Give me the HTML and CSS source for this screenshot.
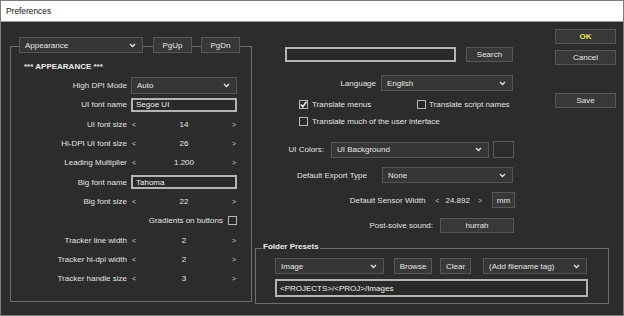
FILE: index.html
```html
<!DOCTYPE html>
<html>
<head>
<meta charset="utf-8">
<link rel="stylesheet" href="styles.css">
</head>
<body>
<div class="window">
  <div class="titlebar">Preferences</div>
  <div class="content">
    <div class="lgroup">
      <div class="ghead">
        <div class="combo hcombo"><span>Appearance</span><svg class="chev" width="7" height="5" viewBox="0 0 7 5"><path d="M1 1l2.5 2.5L6 1" fill="none" stroke="#e0e0e0" stroke-width="1.4"/></svg></div>
        <div class="btn pg">PgUp</div>
        <div class="btn pg">PgDn</div>
      </div>
      <div class="gtitle">*** APPEARANCE ***</div>
      <div class="row"><span class="lbl">High DPI Mode</span><div class="combo ctl"><span>Auto</span><svg class="chev" width="7" height="5" viewBox="0 0 7 5"><path d="M1 1l2.5 2.5L6 1" fill="none" stroke="#e0e0e0" stroke-width="1.4"/></svg></div></div>
      <div class="row"><span class="lbl">UI font name</span><div class="tbox ctl">Segoe UI</div></div>
      <div class="row"><span class="lbl">UI font size</span><div class="step ctl"><span class="arr">&lt;</span><span>14</span><span class="arr">&gt;</span></div></div>
      <div class="row"><span class="lbl">Hi-DPI UI font size</span><div class="step ctl"><span class="arr">&lt;</span><span>26</span><span class="arr">&gt;</span></div></div>
      <div class="row"><span class="lbl">Leading Multiplier</span><div class="step ctl"><span class="arr">&lt;</span><span>1.200</span><span class="arr">&gt;</span></div></div>
      <div class="row"><span class="lbl">Big font name</span><div class="tbox ctl">Tahoma</div></div>
      <div class="row"><span class="lbl">Big font size</span><div class="step ctl"><span class="arr">&lt;</span><span>22</span><span class="arr">&gt;</span></div></div>
      <div class="crow"><span>Gradients on buttons</span><span class="cb"></span></div>
      <div class="row"><span class="lbl">Tracker line width</span><div class="step ctl"><span class="arr">&lt;</span><span>2</span><span class="arr">&gt;</span></div></div>
      <div class="row"><span class="lbl">Tracker hi-dpi width</span><div class="step ctl"><span class="arr">&lt;</span><span>2</span><span class="arr">&gt;</span></div></div>
      <div class="row"><span class="lbl">Tracker handle size</span><div class="step ctl"><span class="arr">&lt;</span><span>3</span><span class="arr">&gt;</span></div></div>
    </div>

    <div class="mid">
      <div class="mrow r-search"><div class="tbox search"></div><div class="btn sbtn">Search</div></div>
      <div class="mrow r-lang"><span>Language</span><div class="combo lang"><span>English</span><svg class="chev" width="7" height="5" viewBox="0 0 7 5"><path d="M1 1l2.5 2.5L6 1" fill="none" stroke="#e0e0e0" stroke-width="1.4"/></svg></div></div>
      <div class="cbrow r-cb1">
        <span class="cbitem first"><span class="cb"><svg width="9" height="9" viewBox="0 0 9 9"><path d="M1.8 4.6l2 2.2 3.6-5" fill="none" stroke="#f0f0f0" stroke-width="1.5"/></svg></span>Translate menus</span>
        <span class="cbitem second"><span class="cb"></span>Translate script names</span>
      </div>
      <div class="cbrow r-cb2"><span class="cbitem"><span class="cb"></span>Translate much of the user interface</span></div>
      <div class="mrow r-colors"><span>UI Colors:</span><div class="combo colors"><span>UI Background</span><svg class="chev" width="7" height="5" viewBox="0 0 7 5"><path d="M1 1l2.5 2.5L6 1" fill="none" stroke="#e0e0e0" stroke-width="1.4"/></svg></div><div class="swatch"></div></div>
      <div class="mrow r-export"><span>Default Export Type</span><div class="combo export"><span>None</span><svg class="chev" width="7" height="5" viewBox="0 0 7 5"><path d="M1 1l2.5 2.5L6 1" fill="none" stroke="#e0e0e0" stroke-width="1.4"/></svg></div></div>
      <div class="mrow r-sensor"><span>Default Sensor Width</span><span class="arr sl">&lt;</span><span class="sval">24.892</span><span class="arr sr">&gt;</span><div class="btn mm">mm</div></div>
      <div class="mrow r-sound"><span>Post-solve sound:</span><div class="btn hurrah">hurrah</div></div>
    </div>

    <div class="side">
      <div class="btn sidebtn ok">OK</div>
      <div class="btn sidebtn cancel">Cancel</div>
      <div class="btn sidebtn save">Save</div>
    </div>

    <div class="folder">
      <span class="legend">Folder Presets</span>
      <div class="frow">
        <div class="combo fimg"><span>Image</span><svg class="chev" width="7" height="5" viewBox="0 0 7 5"><path d="M1 1l2.5 2.5L6 1" fill="none" stroke="#e0e0e0" stroke-width="1.4"/></svg></div>
        <div class="btn browse">Browse</div>
        <div class="btn clear">Clear</div>
        <div class="combo ftag"><span>(Add filename tag)</span><svg class="chev" width="7" height="5" viewBox="0 0 7 5"><path d="M1 1l2.5 2.5L6 1" fill="none" stroke="#e0e0e0" stroke-width="1.4"/></svg></div>
      </div>
      <div class="tbox path">&lt;PROJECTS&gt;/&lt;PROJ&gt;/Images</div>
    </div>
  </div>
</div>
</body>
</html>
```

FILE: styles.css
```css
* { box-sizing: border-box; }
body {
  margin: 0;
  background: #2c2c2c;
  font-family: "Liberation Sans", Arial, sans-serif;
  font-size: 8px;
  color: #e2e2e2;
  white-space: nowrap;
}
.window {
  width: 624px;
  height: 316px;
  border: 1px solid #7c7c7c;
  background: #2c2c2c;
  display: flex;
  flex-direction: column;
}
.titlebar {
  height: 21px;
  flex: none;
  background: #ffffff;
  border-bottom: 1px solid #9a9a9a;
  color: #111;
  padding-left: 5px;
  display: flex;
  align-items: center;
  font-size: 8.4px;
}
.content {
  display: grid;
  grid-template-columns: 242px 297px 61px;
  grid-template-rows: 210px auto;
  column-gap: 3px;
  padding-left: 9px;
  align-items: start;
}

/* left group */
.lgroup {
  grid-row: 1 / 3;
  grid-column: 1;
  margin-top: 24px;
  height: 256px;
  border: 1px solid #6e6e6e;
  padding-left: 8px;
}
.ghead {
  margin-top: -10px;
  height: 16px;
  display: flex;
  gap: 10px;
  position: relative;
}
.ghead .pg { width: 39px; }
.ghead .pg + .pg { margin-left: -1px; }
.combo {
  height: 16px;
  background: #363636;
  border: 1px solid #555;
  display: flex;
  align-items: center;
  justify-content: space-between;
  padding: 0 6px 0 5px;
  color: #e6e6e6;
}
.chev { flex: none; }
.hcombo { width: 124px; }
.btn {
  height: 16px;
  background: #383838;
  border: 1px solid #575757;
  display: flex;
  align-items: center;
  justify-content: center;
  color: #e6e6e6;
}
.gtitle {
  margin-top: 4px;
  height: 19px;
  padding-left: 5px;
  display: flex;
  align-items: center;
  font-weight: bold;
  color: #ececec;
}
.row {
  height: 19.3px;
  display: grid;
  grid-template-columns: 108px 106px;
  column-gap: 4px;
  align-items: center;
}
.lbl { text-align: right; }
.row .combo { height: 17px; }
.tbox {
  height: 14px;
  border: 2px solid #b4b4b4;
  background: #2a2a2a;
  display: flex;
  align-items: center;
  padding-left: 3px;
  color: #f0f0f0;
}
.step {
  display: flex;
  justify-content: space-between;
  align-items: center;
  padding: 0 1px 0 1px;
  color: #e8e8e8;
}
.arr { font-size: 7px; color: #d0d0d0; }
.crow {
  height: 19.3px;
  width: 218px;
  display: flex;
  justify-content: flex-end;
  align-items: center;
  gap: 5px;
}
.cb {
  width: 9px;
  height: 9px;
  border: 1px solid #b8b8b8;
  background: #2a2a2a;
  display: inline-flex;
  flex: none;
  position: relative;
}
.cb svg { margin: -1px; }

/* middle */
.mid {
  grid-column: 2;
  grid-row: 1;
  padding-right: 37px;
}
.mrow {
  display: flex;
  justify-content: flex-end;
  align-items: center;
}
.r-search { margin-top: 25px; height: 15px; margin-right: 2px; }
.search { width: 171px; height: 15px; }
.sbtn { width: 47px; height: 15px; margin-left: 10px; }
.r-lang { margin-top: 13px; height: 16px; margin-right: 2px; }
.lang { width: 132px; margin-left: 5px; }
.cbrow {
  display: flex;
  align-items: center;
  padding-left: 44px;
  height: 10px;
}
.cbitem { display: flex; align-items: center; gap: 4px; }
.cbitem.first { width: 118px; }
.cbitem.second { gap: 3px; }
.r-cb1 { margin-top: 8px; }
.r-cb2 { margin-top: 7px; }
.r-colors { margin-top: 15px; height: 17px; margin-right: 1px; }
.colors { width: 158px; margin-left: 7px; }
.swatch { width: 21px; height: 17px; border: 1px solid #5a5a5a; background: #2c2c2c; margin-left: 4px; }
.r-export { margin-top: 9px; height: 16px; margin-right: 2px; }
.export { width: 131px; margin-left: 15px; }
.r-sensor { margin-top: 9px; height: 16px; }
.sl { margin-left: 10px; }
.sval { margin-left: 6px; color: #e6e6e6; }
.sr { margin-left: 8px; }
.mm { width: 23px; margin-left: 10px; }
.r-sound { margin-top: 10px; height: 15px; margin-right: 1px; }
.hurrah { width: 74px; height: 15px; margin-left: 7px; }

/* side buttons */
.side {
  grid-column: 3;
  grid-row: 1;
  margin-top: 7px;
  display: flex;
  flex-direction: column;
}
.sidebtn { width: 61px; height: 15px; }
.ok { color: #e8e84c; font-weight: bold; }
.cancel { margin-top: 6px; }
.save { margin-top: 28px; }

/* folder presets */
.folder {
  grid-column: 2 / 4;
  grid-row: 2;
  margin-top: 16px;
  width: 354px;
  height: 56px;
  border: 1px solid #6e6e6e;
  position: relative;
  padding: 9px 0 0 19px;
}
.legend {
  position: absolute;
  top: -7px;
  left: 6px;
  padding: 0 1px;
  background: #2c2c2c;
  font-weight: bold;
  color: #ececec;
}
.frow { display: flex; height: 16px; }
.fimg { width: 109px; }
.browse { width: 38px; margin-left: 10px; }
.clear { width: 31px; margin-left: 8px; }
.ftag { width: 104px; margin-left: 12px; }
.path { width: 313px; height: 18px; margin-top: 5px; }
```
